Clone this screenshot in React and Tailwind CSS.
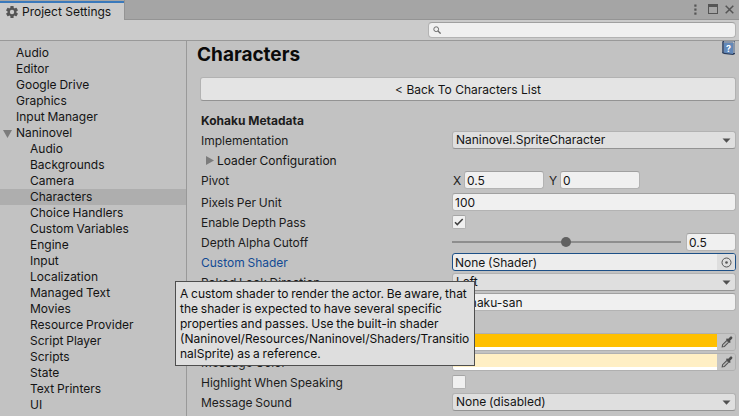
import React from "react";

const topItems = ["Audio", "Editor", "Google Drive", "Graphics", "Input Manager"];
const subItems = [
  "Audio", "Backgrounds", "Camera", "Characters", "Choice Handlers", "Custom Variables",
  "Engine", "Input", "Localization", "Managed Text", "Movies", "Resource Provider",
  "Script Player", "Scripts", "State", "Text Printers", "UI",
];

const inputBox =
  "h-[18px] rounded-[3px] border border-[#b3b3b3] border-t-[#a0a0a0] bg-[#f0f0f0] pl-[2px] leading-[17px] whitespace-nowrap";

function Row({ label, labelClass = "text-[#1c1c1c]", className = "", children }) {
  return (
    <div className={`flex h-5 shrink-0 items-center ${className}`}>
      <div className={`w-[251px] shrink-0 whitespace-nowrap pt-[2px] leading-5 ${labelClass}`}>{label}</div>
      <div className="flex h-5 min-w-0 flex-1 items-center">{children}</div>
    </div>
  );
}

function Dropdown({ children }) {
  return (
    <div className="flex h-[18px] flex-1 items-center justify-between rounded-[3px] border border-[#b2b2b2] border-b-[#939393] bg-[#dfdfdf] pl-[3px] pr-1 leading-4">
      <span>{children}</span>
      <svg width="9" height="5" viewBox="0 0 9 5"><path d="M0.5 0.5h8L4.5 4.7z" fill="#505050" /></svg>
    </div>
  );
}

function Dropper() {
  return (
    <svg width="12" height="12" viewBox="0 0 12 12">
      <path d="M1.2 10.9l.4-2.2L6 4.3l1.8 1.8-4.4 4.4z" fill="#b8b8b8" stroke="#555" strokeWidth="1.1" />
      <path d="M5 3.2l1-1 1 .9L9 .9c1.5-1.3 3.2.5 2 1.9L8.9 5l.9 1-1 1z" fill="#4b4b4b" />
    </svg>
  );
}

function ColorField({ swatch }) {
  return (
    <div className="flex h-[18px] flex-1 overflow-hidden rounded-[3px] border border-[#b0b0b0]">
      <div className="flex w-[264px] flex-col bg-white">
        <div className={`h-[13px] ${swatch}`} />
      </div>
      <div className="flex flex-1 items-center justify-center bg-[#c5c5c5] pl-px"><Dropper /></div>
    </div>
  );
}

function Check({ checked }) {
  return (
    <div className="mb-px flex h-[14px] w-[14px] items-center justify-center rounded-[2px] border border-[#b2b2b2] border-t-[#a5a5a5] bg-[#f0f0f0]">
      {checked && (
        <svg width="10" height="8" viewBox="0 0 10 8"><path d="M1 4.3l2.3 2.3L8.7 1" fill="none" stroke="#404040" strokeWidth="1.5" /></svg>
      )}
    </div>
  );
}

export default function App() {
  return (
    <div className="relative flex h-[416px] w-[739px] flex-col overflow-hidden bg-[#c2c2c2] font-['Inter',sans-serif] text-[12px] text-[#141414] [word-spacing:-0.6px]">
      <header className="flex h-5 shrink-0 bg-[#a5a5a5]">
        <div className="flex h-5 w-[124px] items-center rounded-t-[2px] border-t border-[#a5a5a5] bg-[#cbcbcb]">
          <div className="flex h-[19px] w-full items-center border-t-2 border-[#3a79bb] pl-[6px]">
            <svg width="12" height="12" viewBox="0 0 12 12">
              <g fill="#555">
                <rect x="4.4" y="0" width="3.2" height="12" rx=".5" />
                <rect x="4.4" y="0" width="3.2" height="12" rx=".5" transform="rotate(60 6 6)" />
                <rect x="4.4" y="0" width="3.2" height="12" rx=".5" transform="rotate(120 6 6)" />
                <circle cx="6" cy="6" r="4.4" />
              </g>
              <circle cx="6" cy="6" r="2.2" fill="#cbcbcb" />
            </svg>
            <span className="ml-[4px] whitespace-nowrap leading-4 [word-spacing:0]">Project Settings</span>
          </div>
        </div>
        <div className="flex flex-1 items-center justify-end border-b border-l border-[#949494] pb-px pr-[5px]">
          <svg className="mr-[11px]" width="3" height="11" viewBox="0 0 3 11" fill="#555">
            <rect x=".3" y=".5" width="2.2" height="2.2" /><rect x=".3" y="4.5" width="2.2" height="2.2" /><rect x=".3" y="8.5" width="2.2" height="2.2" />
          </svg>
          <svg className="mr-[7px]" width="10" height="10" viewBox="0 0 10 10" fill="#555">
            <path fillRule="evenodd" d="M0 0h10v10H0zM1 3v6h8V3z" />
          </svg>
          <svg width="9" height="9" viewBox="0 0 9 9"><path d="M.7.7l7.6 7.6M8.3.7L.7 8.3" stroke="#555" strokeWidth="1.5" /></svg>
        </div>
      </header>

      <div className="flex h-[21px] shrink-0 items-center justify-end border-b border-[#999] bg-[#cbcbcb] pr-[3px]">
        <div className="flex h-[16px] w-[308px] items-center rounded-[4px] border border-[#b3b3b3] border-t-[#a0a0a0] bg-[#f0f0f0] pl-[4px]">
          <svg width="8" height="8" viewBox="0 0 9 9" fill="none" stroke="#6a6a6a">
            <circle cx="3.6" cy="3.6" r="2.7" strokeWidth="1.1" /><path d="M5.6 5.6l3 3" strokeWidth="1.4" />
          </svg>
        </div>
      </div>

      <div className="flex min-h-0 flex-1">
        <nav className="w-[187px] shrink-0 overflow-hidden border-r border-[#999] pt-1 leading-4">
          {topItems.map((t) => <div key={t} className="h-4 pl-4">{t}</div>)}
          <div className="flex h-4 items-center pl-[3px]">
            <svg className="mt-px" width="9" height="8" viewBox="0 0 9 8"><path d="M0 0h9L4.5 8z" fill="#7c7c7c" /></svg>
            <span className="ml-1">Naninovel</span>
          </div>
          {subItems.map((t) => (
            <div key={t} className={`h-4 pl-[30px] ${t === "Characters" ? "bg-[#aeaeae]" : ""}`}>{t}</div>
          ))}
        </nav>

        <main className="flex min-w-0 flex-1 flex-col overflow-hidden pl-[14px] pr-[3px]">
          <div className="-ml-1 flex h-9 shrink-0 items-start justify-between">
            <h1 className="text-[19px] font-bold leading-[27px] text-[#0a0a0a]">Characters</h1>
            <svg className="mr-px" width="13" height="14" viewBox="0 0 13 14">
              <path d="M0 1L1 0h12v13l-2 1-9-1-2-1z" fill="#2b3d5b" />
              <path d="M2 .5h10.5v11.5h-1V1.6H2z" fill="#e8edf3" />
              <path d="M2 2h9v11l-9-1.2z" fill="#6288b9" />
              <path d="M1 1v10.5" stroke="#9eb0c8" strokeWidth=".6" />
              <text x="6.5" y="10.5" textAnchor="middle" fontSize="9" fontWeight="700" fill="#fff" fontFamily="Inter">?</text>
            </svg>
          </div>
          <div className="-ml-px flex h-6 shrink-0 items-center justify-center rounded-[3px] border border-[#b2b2b2] border-b-[#939393] bg-[#e4e4e4] pt-px leading-4 [word-spacing:0]">
            &lt; Back To Characters List
          </div>
          <div className="mt-[11px] h-[18px] shrink-0 font-bold leading-[18px] text-[#1c1c1c] [word-spacing:0]">Kohaku Metadata</div>

          <Row label="Implementation"><Dropdown>Naninovel.SpriteCharacter</Dropdown></Row>
          <div className="flex h-5 shrink-0 items-center pl-[5px]">
            <svg width="8" height="9" viewBox="0 0 8 9"><path d="M0 0v9l8-4.5z" fill="#7c7c7c" /></svg>
            <span className="ml-[3px] pt-[2px]">Loader Configuration</span>
          </div>
          <Row label="Pivot">
            <span className="w-3 pl-px pt-[2px] text-[#1c1c1c]">X</span>
            <div className={`w-[80px] ${inputBox}`}>0.5</div>
            <span className="ml-[5px] w-[11px] pt-[2px] text-[#1c1c1c]">Y</span>
            <div className={`w-[80px] ${inputBox}`}>0</div>
          </Row>
          <Row label="Pixels Per Unit" className="mt-[2px]"><div className={`flex-1 ${inputBox}`}>100</div></Row>
          <Row label="Enable Depth Pass"><Check checked /></Row>
          <Row label="Depth Alpha Cutoff">
            <div className="flex h-[2px] w-[229px] items-center bg-[#8e8e8e] pl-[109px]">
              <div className="h-[10px] w-[10px] shrink-0 rounded-full bg-[#616161]" />
            </div>
            <div className={`ml-[5px] flex-1 ${inputBox}`}>0.5</div>
          </Row>
          <Row label="Custom Shader" labelClass="text-[#124a94]">
            <div className="flex h-[18px] flex-1 overflow-hidden rounded-[3px] border border-[#1d5087] bg-[#ededed]">
              <div className="flex-1 pl-[2px] leading-[17px]">None (Shader)</div>
              <div className="flex w-[18px] items-center justify-center bg-[#dedede]">
                <svg width="11" height="11" viewBox="0 0 11 11"><circle cx="5.5" cy="5.5" r="4.5" fill="none" stroke="#555" /><circle cx="5.5" cy="5.5" r="1.3" fill="#555" /></svg>
              </div>
            </div>
          </Row>
          <Row label="Baked Look Direction"><Dropdown>Left</Dropdown></Row>
          <Row><div className={`flex-1 ${inputBox}`}>Kohaku-san</div></Row>
          <Row><Check /></Row>
          <Row><ColorField swatch="bg-[#ffc000]" /></Row>
          <Row label="Message Color"><ColorField swatch="bg-[#ffefc4]" /></Row>
          <Row label="Highlight When Speaking"><Check /></Row>
          <Row label="Message Sound"><Dropdown>None (disabled)</Dropdown></Row>
        </main>
      </div>

      <div className="absolute left-[175px] top-[281px] h-[85px] w-[300px] border border-[#4e4e4e] bg-[#dedede] pl-1 pt-1 leading-[15px] whitespace-nowrap text-[#0e0e0e]">
        <div>A custom shader to render the actor. Be aware, that</div>
        <div>the shader is expected to have several specific</div>
        <div>properties and passes. Use the built-in shader</div>
        <div>(Naninovel/Resources/Naninovel/Shaders/Transitio</div>
        <div>nalSprite) as a reference.</div>
      </div>
    </div>
  );
}
